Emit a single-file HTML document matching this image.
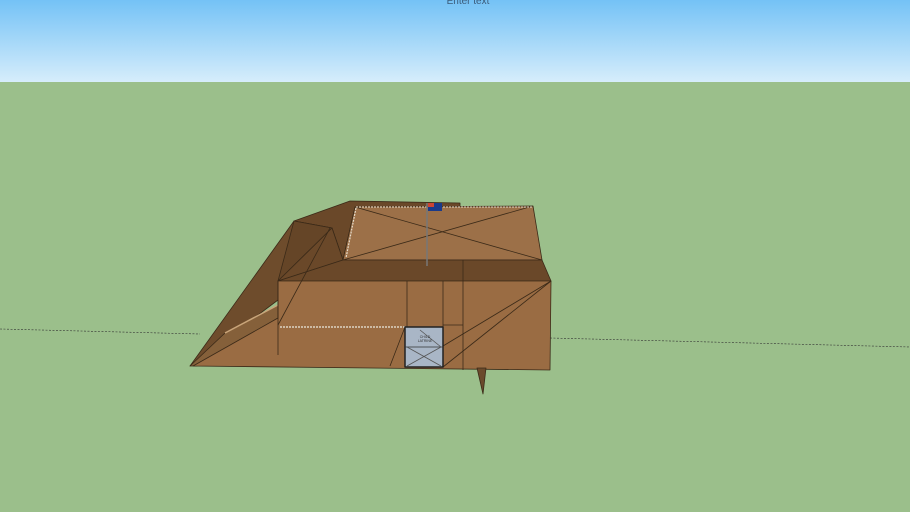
<!DOCTYPE html>
<html><head><style>
html,body{margin:0;padding:0;width:910px;height:512px;overflow:hidden;background:#9bbf8b}
svg{display:block}
</style></head><body>
<svg width="910" height="512" viewBox="0 0 910 512" xmlns="http://www.w3.org/2000/svg">
<defs>
<linearGradient id="sky" x1="0" y1="0" x2="0" y2="1">
<stop offset="0" stop-color="#74c2f6"/><stop offset="1" stop-color="#d6edfb"/>
</linearGradient>
</defs>
<rect x="0" y="0" width="910" height="82" fill="url(#sky)"/>
<rect x="0" y="82" width="910" height="430" fill="#9bbf8b"/>
<text x="468" y="4" font-family="Liberation Sans, sans-serif" font-size="10" fill="#3a5a78" text-anchor="middle">Enter text</text>
<line x1="0" y1="329" x2="200" y2="334" stroke="#333" stroke-width="0.6" stroke-dasharray="2,1.5"/>
<line x1="550" y1="338" x2="910" y2="347" stroke="#333" stroke-width="0.6" stroke-dasharray="2,1.5"/>
<g stroke="#3b2a18" stroke-width="0.8" stroke-linejoin="round">
<polygon points="350,201 460,203 460,207 355,207 343,260 332,228 294,221" fill="#6a4829"/>
<polygon points="294,221 332,228 343,260 278,281 278,300 190,366" fill="#6e4c2c"/>
<polygon points="294,221 332,228 278,281" fill="#654527"/>
<polygon points="332,228 343,260 278,281" fill="#6a4829"/>
<polygon points="225,333 278,305 278,318 197,366 190,366" fill="#85603a"/>
<line x1="225" y1="333" x2="278" y2="305" stroke="#c9a57a" stroke-width="1.5"/>
<polygon points="355,207 533,206 542,260 343,260" fill="#9c7048"/>
<line x1="355" y1="207" x2="542" y2="260"/><line x1="533" y1="206" x2="343" y2="260"/>
<line x1="356" y1="208" x2="346" y2="258" stroke="#e6dccb" stroke-width="1.2" stroke-dasharray="2,1"/>
<line x1="356" y1="207" x2="532" y2="207" stroke="#e6dccb" stroke-width="1" stroke-dasharray="2,1"/>
<polygon points="343,260 542,260 551,281 278,281" fill="#6a4829"/>
<line x1="463" y1="260" x2="463" y2="281"/>
<polygon points="278,281 551,281 550,370 193,366 278,318" fill="#9a6c43"/>
<line x1="278" y1="281" x2="278" y2="355"/>
<line x1="407" y1="281" x2="407" y2="327"/>
<line x1="443" y1="281" x2="443" y2="327"/>
<line x1="463" y1="281" x2="463" y2="370"/>
<line x1="443" y1="325" x2="463" y2="325"/>
<line x1="551" y1="281" x2="443" y2="367"/>
<line x1="551" y1="281" x2="443" y2="346"/>
<line x1="330" y1="228" x2="278" y2="325"/>
<line x1="280" y1="327" x2="405" y2="327" stroke="#ddd4c5" stroke-width="1.5" stroke-dasharray="2,1"/>
<line x1="405" y1="327" x2="390" y2="366"/>
<polygon points="477,368 486,368 483,394" fill="#6a4a2b"/>
<rect x="405" y="327" width="38" height="40" fill="#a9b6c6" stroke="#222" stroke-width="1.5"/>
<line x1="405" y1="347" x2="443" y2="347" stroke="#333"/>
<line x1="407" y1="366" x2="441" y2="347" stroke="#555"/>
<line x1="407" y1="347" x2="441" y2="366" stroke="#555"/>
<line x1="420" y1="330" x2="441" y2="347" stroke="#555"/>
<text x="425" y="338" font-family="Liberation Sans, sans-serif" font-size="3.5" fill="#333" text-anchor="middle" stroke="none">CHILD</text>
<text x="425" y="342" font-family="Liberation Sans, sans-serif" font-size="3.5" fill="#333" text-anchor="middle" stroke="none">LATRINE</text>
<line x1="427" y1="203" x2="427" y2="266" stroke="#777" stroke-width="1.5"/>
<rect x="428" y="203" width="14" height="8" fill="#1a3a8a" stroke="none"/>
<rect x="428" y="203" width="6" height="4" fill="#c43" stroke="none"/>
</g>
</svg>
</body></html>
